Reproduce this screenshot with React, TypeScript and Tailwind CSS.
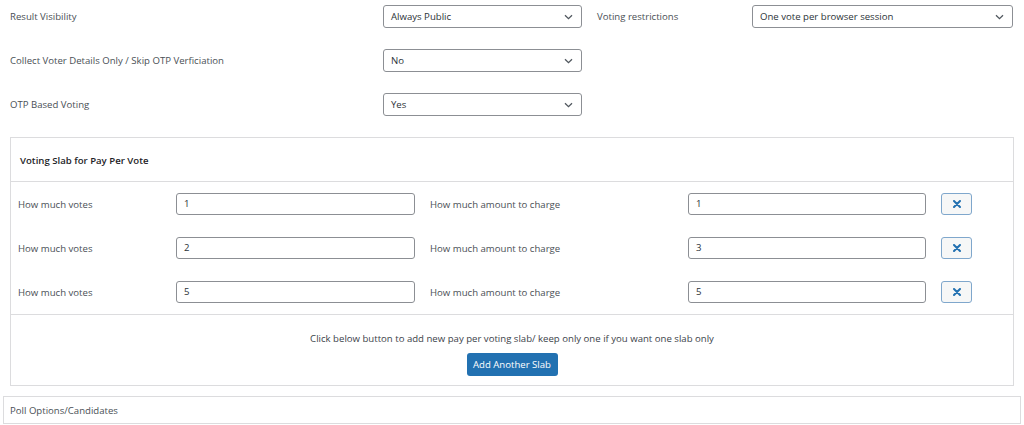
import React from 'react';

const Chevron = () => (
  <svg width="9" height="6" viewBox="0 0 9 6" className="shrink-0">
    <path d="M1 1.2 L4.5 4.6 L8 1.2" fill="none" stroke="#50575e" strokeWidth="1.3" />
  </svg>
);

const SelectBox = ({ value, width }: { value: string; width: string }) => (
  <div
    className={`${width} h-[23px] flex items-center justify-between pl-[7px] pr-[8px] border border-[#8c8f94] rounded-[3px] bg-white text-[#2c3338]`}
  >
    <span className="pt-[1px]">{value}</span>
    <Chevron />
  </div>
);

const TextBox = ({ value, width }: { value: string; width: string }) => (
  <div
    className={`${width} h-[22px] flex items-center px-[7px] pt-[1px] border border-[#8c8f94] rounded-[3px] bg-white text-[#2c3338]`}
  >
    {value}
  </div>
);

const RemoveButton = () => (
  <div className="w-[31px] h-[22px] flex items-center justify-center border border-[#7fa7cc] rounded-[3px] bg-[#f6f7f7]">
    <svg width="8" height="8" viewBox="0 0 8 8">
      <path d="M1 1 L7 7 M7 1 L1 7" stroke="#2271b1" strokeWidth="2" strokeLinecap="round" />
    </svg>
  </div>
);

const slabs = [
  { votes: '1', amount: '1' },
  { votes: '2', amount: '3' },
  { votes: '5', amount: '5' },
];

const App = () => {
  return (
    <div
      className="w-[1024px] h-[425px] bg-white text-[9.6px] text-[#4a5056] overflow-hidden"
      style={{ fontFamily: '"Open Sans", "Noto Sans", sans-serif' }}
    >
      <div className="flex flex-col gap-[21px] pt-[5px] pl-[10px]">
        <div className="flex items-center">
          <span className="w-[373px] pt-[2px]">Result Visibility</span>
          <SelectBox value="Always Public" width="w-[199px]" />
          <span className="w-[170px] pl-[15px] pt-[2px]">Voting restrictions</span>
          <SelectBox value="One vote per browser session" width="w-[261px]" />
        </div>
        <div className="flex items-center">
          <span className="w-[373px] pt-[2px]">Collect Voter Details Only / Skip OTP Verficiation</span>
          <SelectBox value="No" width="w-[199px]" />
        </div>
        <div className="flex items-center">
          <span className="w-[373px] pt-[2px]">OTP Based Voting</span>
          <SelectBox value="Yes" width="w-[199px]" />
        </div>
      </div>

      <div className="mt-[21px] ml-[10px] w-[1004px] border border-[#dcdcde]">
        <div className="h-[44px] flex items-center px-[9px] pt-[3px] font-semibold text-[#1d2327] border-b border-[#dcdcde]">
          Voting Slab for Pay Per Vote
        </div>
        <div className="flex flex-col gap-[22px] py-[11px] px-[7px] border-b border-[#dcdcde]">
          {slabs.map((s, i) => (
            <div key={i} className="flex items-center">
              <span className="w-[158px] pt-[2px]">How much votes</span>
              <TextBox value={s.votes} width="w-[239px]" />
              <span className="w-[273px] pl-[15px] pt-[2px]">How much amount to charge</span>
              <TextBox value={s.amount} width="w-[238px]" />
              <div className="pl-[15px]">
                <RemoveButton />
              </div>
            </div>
          ))}
        </div>
        <div className="h-[70px] flex flex-col items-center pt-[17px] gap-[7px]">
          <span className="text-[#3c434a]">
            Click below button to add new pay per voting slab/ keep only one if you want one slab only
          </span>
          <div className="w-[91px] h-[23px] flex items-center justify-center rounded-[3px] bg-[#2271b1] text-white">
            Add Another Slab
          </div>
        </div>
      </div>

      <div className="mt-[10px] ml-[3px] w-[1018px] h-[28px] flex items-center pl-[6px] pt-[2px] border border-[#dcdcde]">
        Poll Options/Candidates
      </div>
    </div>
  );
};

export default App;
